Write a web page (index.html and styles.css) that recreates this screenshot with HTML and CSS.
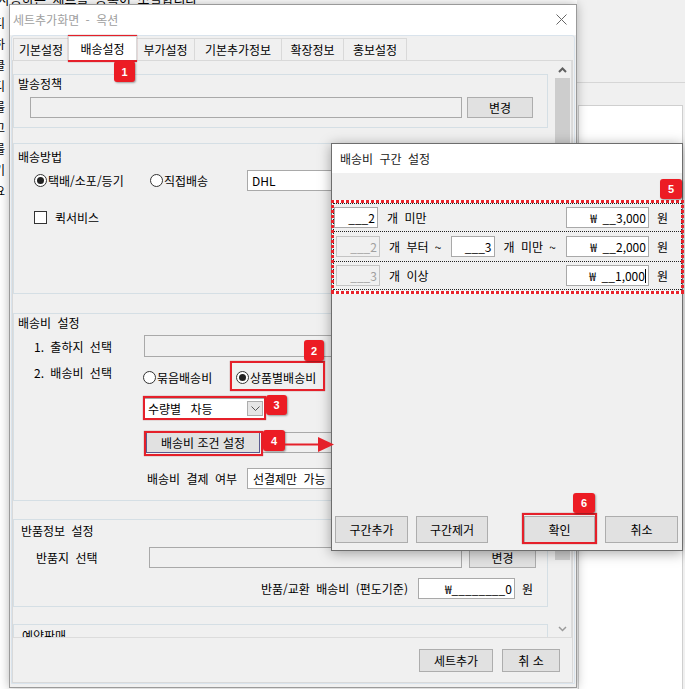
FILE: index.html
```html
<!DOCTYPE html>
<html lang="ko">
<head>
    <meta charset="UTF-8">
    <meta name="viewport" content="width=device-width, initial-scale=1.0">
    <title>세트추가화면 - 옥션</title>
    <link rel="stylesheet" href="styles.css">
</head>
<body>
<div class="screen">

    <div class="desk-top">사용하는 세트를 등록이 조절합니다</div>
    <div class="desk-left">디<br>하<br>클<br>디<br>를<br>고<br>를<br>기<br>요</div>
    <div class="back-win">
        <div class="back-head"></div>
        <div class="back-box"></div>
    </div>

    <!-- 세트추가 창 -->
    <div class="win main">
        <div class="titlebar">
            <span class="title">세트추가화면 - 옥션</span>
            <svg class="close" width="11" height="11" viewBox="0 0 11 11"><path d="M0.5 0.5L10.5 10.5M10.5 0.5L0.5 10.5" stroke="#666" stroke-width="1" fill="none"/></svg>
        </div>
        <div class="frame">
            <div class="tabs">
                <span class="tab">기본설정</span>
                <span class="tab on">배송설정</span>
                <span class="tab">부가설정</span>
                <span class="tab">기본추가정보</span>
                <span class="tab">확장정보</span>
                <span class="tab">홍보설정</span>
            </div>
            <div class="page">
                <div class="view">
                    <div class="content">

                        <div class="group g1">
                            <div class="glabel">발송정책</div>
                            <div class="row policy-row">
                                <span class="field gray policy-field"></span>
                                <button class="btn policy-btn">변경</button>
                            </div>
                        </div>

                        <div class="group g2">
                            <div class="glabel">배송방법</div>
                            <div class="row method-row">
                                <span class="radio-item method-r1"><i class="radio checked"></i>택배/소포/등기</span>
                                <span class="radio-item method-r2"><i class="radio"></i>직접배송</span>
                                <span class="field white dhl">DHL</span>
                            </div>
                            <div class="row quick-row">
                                <i class="check"></i><span class="quick-text">퀵서비스</span>
                            </div>
                        </div>

                        <div class="group g3">
                            <div class="glabel">배송비 설정</div>
                            <div class="row origin-row">
                                <span class="row-label">1. 출하지 선택</span>
                                <span class="field gray origin-field"></span>
                            </div>
                            <div class="row fee-row">
                                <span class="row-label fee-label">2. 배송비 선택</span>
                                <span class="radio-item fee-r1"><i class="radio"></i>묶음배송비</span>
                                <span class="radio-item"><i class="radio checked"></i>상품별배송비</span>
                            </div>
                            <div class="row select-row">
                                <span class="select">수량별 차등<span class="drop"><svg width="9" height="6" viewBox="0 0 9 6"><path d="M0.5 0.5L4.5 4.5L8.5 0.5" stroke="#555" fill="none"/></svg></span></span>
                            </div>
                            <div class="row cond-row">
                                <button class="btn focus cond-btn">배송비 조건 설정</button>
                                <span class="field gray cond-field"></span>
                            </div>
                            <div class="row pay-row">
                                <span class="pay-label">배송비 결제 여부</span>
                                <span class="field white pay-field">선결제만 가능</span>
                            </div>
                        </div>

                        <div class="group g4">
                            <div class="glabel">반품정보 설정</div>
                            <div class="row return-row">
                                <span class="return-label">반품지 선택</span>
                                <span class="field gray return-field"></span>
                                <button class="btn return-btn">변경</button>
                            </div>
                            <div class="row refund-row">
                                <span>반품/교환 배송비 (편도기준)</span>
                                <span class="field white money refund-field">₩________0</span>
                                <span class="won">원</span>
                            </div>
                        </div>

                        <div class="group g5">
                            <div class="glabel">예약판매</div>
                        </div>

                    </div>
                    <div class="scrollbar">
                        <span class="sb-btn"><svg width="9" height="6" viewBox="0 0 9 6"><path d="M1 5L4.5 1.5L8 5" stroke="#606060" stroke-width="2" fill="none"/></svg></span>
                        <span class="thumb"></span>
                        <span class="sb-track"></span>
                        <span class="sb-btn"><svg width="9" height="6" viewBox="0 0 9 6"><path d="M1 1L4.5 4.5L8 1" stroke="#9a9a9a" stroke-width="1.5" fill="none"/></svg></span>
                    </div>
                </div>
                <div class="footer">
                    <button class="btn add-btn">세트추가</button>
                    <button class="btn cancel-btn">취 소</button>
                </div>
            </div>
        </div>
    </div>

    <!-- 배송비 구간 설정 창 -->
    <div class="win dialog">
        <div class="dtitle">배송비 구간 설정</div>
        <div class="dbody">
            <div class="ranges">
                <div class="range first">
                    <span class="field white num">___2</span>
                    <span class="rtext">개 미만</span>
                    <span class="field white money amount">₩ __3,000</span>
                    <span class="won">원</span>
                </div>
                <div class="range mid">
                    <span class="field off num">___2</span>
                    <span class="rtext">개 부터 ~</span>
                    <span class="field white num num-to">___3</span>
                    <span class="rtext">개 미만 ~</span>
                    <span class="field white money amount">₩ __2,000</span>
                    <span class="won">원</span>
                </div>
                <div class="range last">
                    <span class="field off num">___3</span>
                    <span class="rtext">개 이상</span>
                    <span class="field white money amount">₩ __1,000<i class="caret"></i></span>
                    <span class="won">원</span>
                </div>
            </div>
            <div class="dbuttons">
                <button class="btn dbtn">구간추가</button>
                <button class="btn dbtn gap-s">구간제거</button>
                <button class="btn dbtn gap-l">확인</button>
                <button class="btn dbtn gap-m">취소</button>
            </div>
        </div>
    </div>

    <!-- 안내 표시 -->
    <div class="mark m1"></div>
    <div class="badge b1">1</div>
    <div class="mark m2"></div>
    <div class="badge b2">2</div>
    <div class="mark m3"></div>
    <div class="badge b3">3</div>
    <div class="mark m4"></div>
    <div class="badge b4">4</div>
    <svg class="arrow" width="50" height="17" viewBox="0 0 50 17"><path d="M0 8.5H36" stroke="#e5202a" stroke-width="2"/><path d="M34 1L50 8.5L34 16Z" fill="#e5202a"/></svg>
    <div class="dots"></div>
    <div class="badge b5">5</div>
    <div class="mark m6"></div>
    <div class="badge b6">6</div>

</div>
</body>
</html>
```

FILE: styles.css
```css
* { box-sizing: border-box; }
body { margin: 0; font-family: "Noto Sans CJK KR", "Noto Sans", sans-serif; font-size: 12px; color: #000; word-spacing: 3px; }
button { font: inherit; color: inherit; padding: 0; }

.screen { position: relative; width: 685px; height: 689px; overflow: hidden; background: #fff; }

/* 뒤쪽 화면 */
.desk-top { position: absolute; left: -2px; top: -8px; font-size: 13px; line-height: 14px; white-space: nowrap; color: #000; }
.desk-left { position: absolute; left: -6px; top: 12px; font-size: 12px; line-height: 21px; color: #000; }
.back-win { position: absolute; left: 577px; top: 0; width: 108px; height: 689px; background: #f0f0f0; }
.back-head { height: 83px; border-bottom: 1px solid #d6d6d6; }
.back-box { margin: 22px 2px 0 1px; height: 600px; background: #fff; border: 1px solid #cfcfcf; }

/* 창 공통 */
.win { position: absolute; background: #f0f0f0; border: 1px solid #9a9a9a; box-shadow: 0 0 10px rgba(0, 0, 0, 0.28); display: flex; flex-direction: column; }
.main { left: 9px; top: 4px; width: 568px; height: 684px; }
.titlebar { height: 30px; flex-shrink: 0; background: #fff; display: flex; align-items: center; justify-content: space-between; padding: 0 9px 2px 3px; }
.title { color: #a0a0a0; }

.frame { flex: 1; margin: 0 1px 3px 1px; border: 1px solid #d9e3ec; border-radius: 3px 3px 0 0; padding-top: 2px; display: flex; flex-direction: column; }
.tabs { display: flex; height: 22px; margin-left: 1px; }
.tab { height: 22px; border: 1px solid #d9d9d9; border-bottom: none; background: #f0f0f0; margin-right: -1px; display: flex; align-items: center; justify-content: center; }
.tab:nth-child(1) { width: 56px; }
.tab:nth-child(2) { width: 69px; }
.tab:nth-child(3) { width: 59px; }
.tab:nth-child(4) { width: 88px; }
.tab:nth-child(5) { width: 63px; }
.tab:nth-child(6) { width: 64px; }
.tab.on { background: #fff; height: 24px; margin-top: -2px; position: relative; z-index: 1; }

.page { flex: 1; margin-right: 1px; border: 1px solid #d9d9d9; display: flex; flex-direction: column; background: #f0f0f0; }
.view { height: 577px; flex-shrink: 0; display: flex; border-bottom: 1px solid #dcdcdc; overflow: hidden; }
.content { flex: 1; padding-top: 13px; overflow: hidden; }
.scrollbar { width: 18px; border-right: 1px solid #dcdcdc; display: flex; flex-direction: column; background: #f0f0f0; }
.sb-btn { height: 17px; display: flex; align-items: center; justify-content: center; flex-shrink: 0; }
.thumb { height: 482px; margin: 0 1px; background: #cdcdcd; flex-shrink: 0; }
.sb-track { flex: 1; }
.footer { flex: 1; display: flex; justify-content: flex-end; align-items: flex-start; padding: 11px 12px 0 0; gap: 9px; }
.add-btn { width: 74px; height: 23px; }
.cancel-btn { width: 58px; height: 23px; }

/* 그룹 */
.group { width: 535px; border: 1px solid #d5dfe5; overflow: hidden; }
.glabel { height: 14px; line-height: 14px; margin-left: 4px; white-space: nowrap; }
.g1 { height: 54px; margin-bottom: 15px; }
.g1 .glabel { margin-top: 2px; }
.g2 { height: 151px; margin-bottom: 19px; }
.g2 .glabel { margin-top: 6px; }
.g3 { height: 188px; margin-bottom: 18px; }
.g3 .glabel { margin-top: 2px; }
.g4 { height: 88px; margin-bottom: 17px; }
.g4 .glabel { margin-top: 4px; margin-left: 7px; }
.g5 { height: 60px; }
.g5 .glabel { margin-top: 4px; margin-left: 8px; }

.row { display: flex; align-items: center; white-space: nowrap; }
.field { height: 21px; border: 1px solid #a9a9a9; display: flex; align-items: center; padding-left: 4px; flex-shrink: 0; }
.field.gray { background: #f0f0f0; }
.field.white { background: #fff; }
.field.off { background: #f0f0f0; border-color: #c4c4c4; color: #a0a0a0; justify-content: flex-end; padding: 0 2px 0 0; }
.field.money { justify-content: flex-end; padding: 0 2px 0 0; }
.btn { background: #e1e1e1; border: 1px solid #adadad; flex-shrink: 0; }
.btn.focus { border-color: #5b5b8f; }

.radio-item { display: flex; align-items: center; flex-shrink: 0; }
.radio { width: 13px; height: 13px; border: 1px solid #333; border-radius: 50%; background: #fff; margin-right: 1px; display: flex; align-items: center; justify-content: center; }
.radio.checked::after { content: ""; width: 7px; height: 7px; border-radius: 50%; background: #222; }
.check { width: 13px; height: 13px; border: 1px solid #333; background: #fff; }

.policy-row { height: 21px; margin: 6px 0 0 16px; }
.policy-field { width: 432px; }
.policy-btn { width: 66px; height: 21px; margin-left: 5px; }

.method-row { height: 20px; margin: 6px 0 0 20px; }
.method-r1 { width: 116px; }
.method-r2 { width: 97px; }
.dhl { width: 130px; }
.quick-row { height: 14px; margin: 20px 0 0 20px; }
.quick-text { margin-left: 8px; }

.origin-row { height: 22px; margin: 5px 0 0 20px; }
.row-label { width: 110px; flex-shrink: 0; }
.origin-field { width: 250px; height: 22px; }
.fee-row { height: 20px; margin: 10px 0 0 20px; align-items: flex-start; }
.fee-label { width: 109px; line-height: 12px; }
.fee-row .radio-item { height: 20px; }
.fee-r1 { width: 93px; }
.select-row { height: 21px; margin: 11px 0 0 130px; }
.select { width: 121px; height: 21px; background: #fff; border: 1px solid #a9a9a9; display: flex; align-items: center; justify-content: space-between; padding: 0 1px 0 3px; word-spacing: 6px; }
.drop { width: 16px; height: 15px; background: #e5e5e5; border: 1px solid #adadad; display: flex; align-items: center; justify-content: center; }
.cond-row { height: 21px; margin: 13px 0 0 132px; }
.cond-btn { width: 114px; height: 21px; }
.cond-field { width: 150px; margin-left: 2px; }
.pay-row { height: 20px; margin: 15px 0 0 133px; }
.pay-label { width: 100px; }
.pay-field { width: 150px; height: 21px; padding-left: 5px; }

.return-row { height: 22px; margin: 8px 0 0 22px; }
.return-label { width: 113px; }
.return-field { width: 313px; }
.return-btn { width: 67px; height: 22px; margin-left: 7px; }
.refund-row { height: 20px; margin-top: 10px; justify-content: flex-end; padding-right: 14px; }
.refund-field { width: 97px; height: 21px; margin-left: 10px; }
.won { margin-left: 7px; }

/* 배송비 구간 설정 */
.dialog { left: 331px; top: 143px; width: 352px; height: 408px; border-color: #6d6d6d; box-shadow: 0 2px 12px rgba(0, 0, 0, 0.35); }
.dtitle { height: 29px; flex-shrink: 0; line-height: 29px; padding-left: 8px; background: #fff; color: #1a1a1a; }
.dbody { flex: 1; display: flex; flex-direction: column; }
.ranges { margin: 30px 0 0 1px; width: 349px; border-left: 1px dotted #222; border-right: 1px dotted #222; }
.range { display: flex; align-items: center; border-top: 1px dotted #222; padding-right: 13px; white-space: nowrap; }
.range.first { height: 28px; }
.range.mid { height: 30px; padding-left: 2px; }
.range.last { height: 29px; padding-left: 2px; border-bottom: 1px dotted #222; }
.num { width: 44px; justify-content: flex-end; padding: 0 2px 0 0; }
.rtext { margin-left: 9px; }
.num-to { margin-left: 9px; }
.amount { width: 83px; margin-left: auto; }
.range .won { margin-left: 8px; }
.caret { width: 1px; height: 14px; background: #000; }
.dbuttons { margin-top: auto; display: flex; padding: 0 3px 7px 3px; }
.dbtn { height: 27px; width: 73px; }
.gap-s { width: 72px; margin-left: 8px; }
.gap-l { width: 71px; margin-left: 36px; }
.gap-m { margin-left: 10px; }

/* 안내 표시 */
.mark { position: absolute; border: 2px solid #e5202a; box-shadow: 0 0 1px rgba(120, 0, 0, 0.6); }
.badge { position: absolute; background: #ec1c24; color: #fff; font: bold 11px "Liberation Sans", Arial, sans-serif; border-radius: 3px; display: flex; align-items: center; justify-content: center; box-shadow: 1px 1px 2px rgba(0, 0, 0, 0.35); }
.m1 { left: 68px; top: 35px; width: 69px; height: 27px; }
.b1 { left: 114px; top: 61px; width: 21px; height: 21px; }
.m2 { left: 230px; top: 361px; width: 95px; height: 30px; }
.b2 { left: 304px; top: 340px; width: 20px; height: 21px; }
.m3 { left: 143px; top: 396px; width: 123px; height: 24px; }
.b3 { left: 266px; top: 395px; width: 21px; height: 20px; }
.m4 { left: 144px; top: 431px; width: 119px; height: 25px; }
.b4 { left: 263px; top: 430px; width: 22px; height: 21px; }
.arrow { position: absolute; left: 284px; top: 436px; }
.dots { position: absolute; left: 331px; top: 200px; width: 353px; height: 94px;
    background:
        repeating-linear-gradient(90deg, #e8232b 0 3px, transparent 3px 5px) top / 100% 3px no-repeat,
        repeating-linear-gradient(90deg, #e8232b 0 3px, transparent 3px 5px) bottom / 100% 3px no-repeat,
        repeating-linear-gradient(180deg, #e8232b 0 3px, transparent 3px 5px) left / 3px 100% no-repeat,
        repeating-linear-gradient(180deg, #e8232b 0 3px, transparent 3px 5px) right / 3px 100% no-repeat,
        linear-gradient(#fff, #fff) top / 100% 3px no-repeat,
        linear-gradient(#fff, #fff) bottom / 100% 3px no-repeat; }
.b5 { left: 660px; top: 179px; width: 22px; height: 20px; }
.m6 { left: 522px; top: 513px; width: 75px; height: 31px; }
.b6 { left: 573px; top: 493px; width: 22px; height: 20px; }
```
